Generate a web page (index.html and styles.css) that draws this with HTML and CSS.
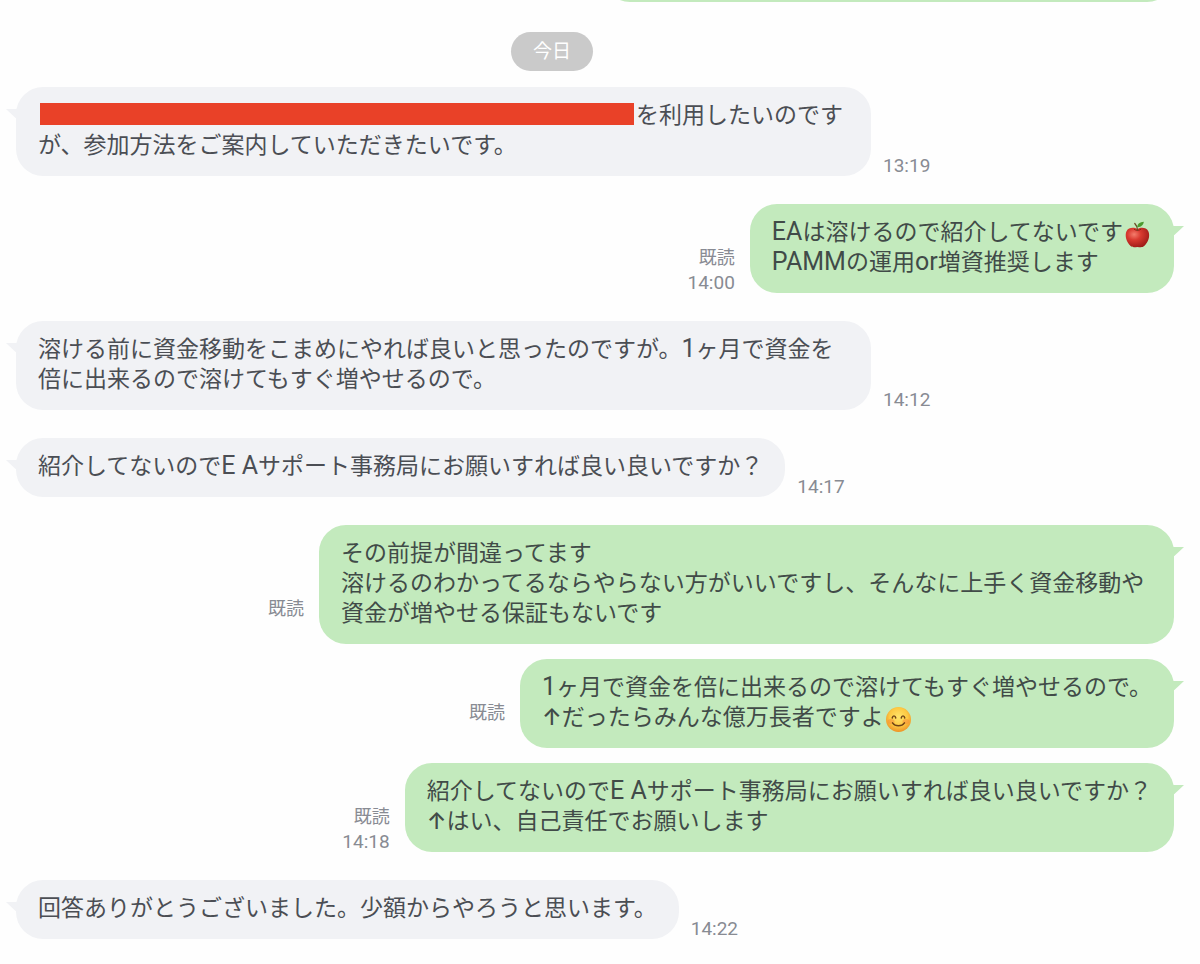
FILE: index.html
```
<!DOCTYPE html>
<html lang="ja">
<head>
    <meta charset="UTF-8">
    <meta name="viewport" content="width=device-width, initial-scale=1.0">
    <title>トーク</title>
    <link rel="stylesheet" href="styles.css">
</head>
<body>
    <main class="chat">
        <div class="message sent previous">
            <div class="bubble"></div>
        </div>

        <div class="day">今日</div>

        <div class="message received">
            <div class="bubble"><span class="redacted"></span>を利用したいのですが、参加方法をご案内していただきたいです。</div>
            <div class="meta"><time>13:19</time></div>
        </div>

        <div class="message sent">
            <div class="meta"><span>既読</span><time>14:00</time></div>
            <div class="bubble"><span class="latin">EA</span>は溶けるので紹介してないです<svg class="emoji" viewBox="0 0 27 27" role="img" aria-label="りんご">
                <defs>
                    <radialGradient id="apple" cx="0.36" cy="0.34" r="0.72">
                        <stop offset="0" stop-color="#f47d6c"/>
                        <stop offset="0.4" stop-color="#d93a30"/>
                        <stop offset="1" stop-color="#9c1a17"/>
                    </radialGradient>
                </defs>
                <path d="M13.4 8.2C10 6 4.6 6.4 2.5 10.2C0.4 14.5 2.6 21.5 6.6 25C8.9 26.9 11 25.9 13.4 25.9C15.8 25.9 18 26.9 20.2 25C24.3 21.5 26.5 14.5 24.3 10.2C22.2 6.4 17 6 13.4 8.2Z" fill="url(#apple)"/>
                <path d="M10 8.2C12 9.7 15 9.7 17 8.2" fill="none" stroke="#8f2019" stroke-width="1"/>
                <path d="M13.5 9C13.4 6.5 12.5 4.2 10.8 2.5" fill="none" stroke="#6b4a24" stroke-width="1.3" stroke-linecap="round"/>
                <path d="M13.2 6.2C13.3 2.8 16 1 19.8 0.8C19.5 4 17 6.4 13.2 6.2Z" fill="#4c9a2f"/>
            </svg><br><span class="latin">PAMM</span>の運用<span class="latin">or</span>増資推奨します</div>
        </div>

        <div class="message received">
            <div class="bubble">溶ける前に資金移動をこまめにやれば良いと思ったのですが。<span class="latin">1</span>ヶ月で資金を倍に出来るので溶けてもすぐ増やせるので。</div>
            <div class="meta"><time>14:12</time></div>
        </div>

        <div class="message received">
            <div class="bubble">紹介してないので<span class="latin">E A</span>サポート事務局にお願いすれば良い良いですか？</div>
            <div class="meta"><time>14:17</time></div>
        </div>

        <div class="message sent">
            <div class="meta"><span>既読</span></div>
            <div class="bubble">その前提が間違ってます<br>溶けるのわかってるならやらない方がいいですし、そんなに上手く資金移動や資金が増やせる保証もないです</div>
        </div>

        <div class="message sent grouped">
            <div class="meta"><span>既読</span></div>
            <div class="bubble"><span class="latin">1</span>ヶ月で資金を倍に出来るので溶けてもすぐ増やせるので。<br><span class="arrow">↑</span>だったらみんな億万長者ですよ<svg class="emoji" viewBox="0 0 27 27" role="img" aria-label="笑顔">
                <defs>
                    <radialGradient id="face" cx="0.5" cy="0.4" r="0.6">
                        <stop offset="0" stop-color="#ffe56b"/>
                        <stop offset="0.6" stop-color="#fdc943"/>
                        <stop offset="1" stop-color="#ee9226"/>
                    </radialGradient>
                </defs>
                <circle cx="13.5" cy="13.5" r="12.5" fill="url(#face)"/>
                <ellipse cx="6" cy="15.5" rx="3.5" ry="2.5" fill="#f58b3c" opacity="0.5"/>
                <ellipse cx="21" cy="15.5" rx="3.5" ry="2.5" fill="#f58b3c" opacity="0.5"/>
                <path d="M7.2 12C7.8 9.2 10.2 9.2 10.8 12M16.2 12C16.8 9.2 19.2 9.2 19.8 12M7.5 16.8C10.3 20.7 16.7 20.7 19.5 16.8" fill="none" stroke="#6f4316" stroke-width="1.4" stroke-linecap="round"/>
            </svg></div>
        </div>

        <div class="message sent grouped">
            <div class="meta"><span>既読</span><time>14:18</time></div>
            <div class="bubble">紹介してないので<span class="latin">E A</span>サポート事務局にお願いすれば良い良いですか？<br><span class="arrow">↑</span>はい、自己責任でお願いします</div>
        </div>

        <div class="message received">
            <div class="bubble">回答ありがとうございました。少額からやろうと思います。</div>
            <div class="meta"><time>14:22</time></div>
        </div>
    </main>
</body>
</html>
```
FILE: styles.css
```
* {
    box-sizing: border-box;
}

body {
    font-family: Roboto, "Noto Sans CJK JP", sans-serif;
    background-color: #fefefe;
    color: #4b4e54;
    margin: 0;
}

.chat {
    display: flow-root;
    padding: 0 26px 24px 16px;
    overflow: hidden;
}

.message {
    display: flex;
    align-items: flex-end;
    margin-top: 28px;
}

.message.sent {
    justify-content: flex-end;
}

.message.grouped {
    margin-top: 15px;
}

/* older message, scrolled almost out of view */
.message.previous {
    margin-top: -57px;
}

.previous .bubble {
    width: 571px;
}

.day {
    width: fit-content;
    margin: 30px auto 0;
    padding: 0 22px;
    border-radius: 20px;
    background: #cacaca;
    color: #fff;
    font-size: 19px;
    line-height: 39px;
    position: relative;
    right: 43px;
}

.day + .message {
    margin-top: 16px;
}

.bubble {
    position: relative;
    max-width: 855px;
    min-height: 59px;
    padding: 14px 22px 15px;
    border-radius: 27px;
    font-size: 23px;
    line-height: 30px;
}

.received .bubble {
    background: #f1f2f5;
}

.sent .bubble {
    background: #c3eabd;
    color: #414b48;
}

/* speech tail */
.bubble::before {
    content: "";
    position: absolute;
    top: 22px;
    width: 12px;
    height: 10px;
    background: inherit;
}

.received .bubble::before {
    left: -10px;
    clip-path: polygon(0 0, 100% 0, 100% 100%, 80% 90%);
}

.sent .bubble::before {
    right: -10px;
    clip-path: polygon(0 0, 100% 0, 20% 90%, 0 100%);
}

.meta {
    display: flex;
    flex-direction: column;
    gap: 4px;
    flex: none;
    color: #888b93;
    font-size: 18px;
    line-height: 21px;
}

.meta time {
    font-size: 19px;
}

.received .meta {
    margin-left: 12px;
}

/* room for the time is kept even when only the read mark shows */
.sent .meta {
    min-height: 46px;
    margin-right: 15px;
    text-align: right;
}

.redacted {
    display: inline-block;
    width: 594px;
    height: 22px;
    margin: 0 2px;
    background: #e94128;
    vertical-align: -2px;
}

.emoji {
    width: 27px;
    height: 27px;
    margin: -3px 1px;
    vertical-align: -5px;
}

.latin {
    font-size: 25px;
    line-height: 1;
}

.arrow {
    font-family: Inter, sans-serif;
    font-weight: 500;
    line-height: 1;
}
```
